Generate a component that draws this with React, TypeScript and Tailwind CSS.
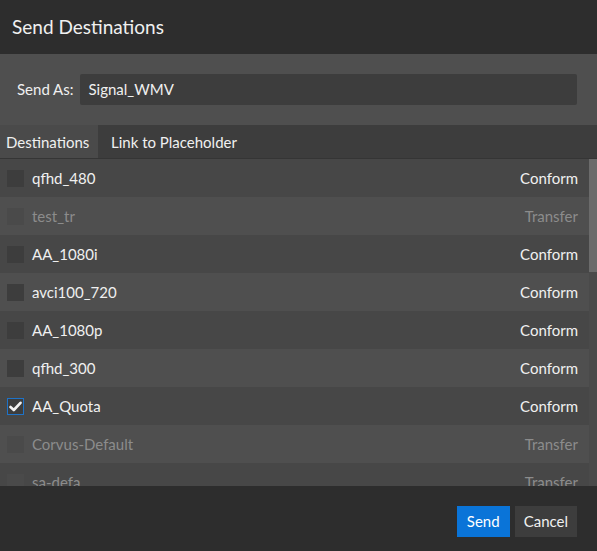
import React from 'react';

type Dest = { name: string; mode: string; enabled: boolean; checked?: boolean };

const destinations: Dest[] = [
  { name: 'qfhd_480', mode: 'Conform', enabled: true },
  { name: 'test_tr', mode: 'Transfer', enabled: false },
  { name: 'AA_1080i', mode: 'Conform', enabled: true },
  { name: 'avci100_720', mode: 'Conform', enabled: true },
  { name: 'AA_1080p', mode: 'Conform', enabled: true },
  { name: 'qfhd_300', mode: 'Conform', enabled: true },
  { name: 'AA_Quota', mode: 'Conform', enabled: true, checked: true },
  { name: 'Corvus-Default', mode: 'Transfer', enabled: false },
  { name: 'sa-defa', mode: 'Transfer', enabled: false },
];

const Checkbox = ({ checked, enabled }: { checked?: boolean; enabled: boolean }) => (
  <div
    className={`w-[17px] h-[17px] flex items-center justify-center shrink-0 ${
      checked ? 'border border-[#1e73c8] bg-[#3d3d3d]' : enabled ? 'bg-[#3d3d3d]' : 'bg-[#4a4a4a]'
    }`}
  >
    {checked && (
      <svg width="13" height="11" viewBox="0 0 13 11">
        <path d="M1.5 6 L4.8 9 L11.5 1.8" fill="none" stroke="#f2f2f2" strokeWidth="2.6" strokeLinecap="round" strokeLinejoin="round" />
      </svg>
    )}
  </div>
);

export default function App() {
  return (
    <div className="w-[597px] h-[551px] flex flex-col bg-[#2d2d2d] overflow-hidden font-['Lato',sans-serif] text-[#f0f0f0]">
      <div className="h-[54px] flex items-center px-3 pb-[2px] shrink-0">
        <h1 className="text-[19px] leading-none">Send Destinations</h1>
      </div>

      <div className="h-[71px] bg-[#4f4f4f] flex items-center pl-[17px] pr-5 gap-[6px] shrink-0">
        <span className="text-[15px]">Send As:</span>
        <div className="flex-1 h-[31px] bg-[#3d3d3d] rounded-[2px] flex items-center px-[9px] text-[15px]">
          Signal_WMV
        </div>
      </div>

      <div className="h-[34px] bg-[#3d3d3d] flex items-stretch border-b border-[#353535] shrink-0 text-[15px]">
        <div className="w-[98px] bg-[#4a4a4a] flex items-center pl-[6px] pt-[1px]">Destinations</div>
        <div className="flex items-center pl-[13px] pt-[1px]">Link to Placeholder</div>
      </div>

      <div className="flex-1 flex min-h-0 bg-[#4a4a4a]">
        <div className="flex-1 flex flex-col overflow-hidden">
          {destinations.map((d, i) => (
            <div
              key={d.name}
              className={`h-[38px] shrink-0 flex items-center pl-[7px] pr-[11px] text-[15px] ${
                i % 2 === 0 ? 'bg-[#474747]' : 'bg-[#4f4f4f]'
              }`}
            >
              <Checkbox checked={d.checked} enabled={d.enabled} />
              <span className={`ml-[8px] flex-1 ${d.enabled ? 'text-[#f0f0f0]' : 'text-[#8c8c8c]'}`}>{d.name}</span>
              <span className={d.enabled ? 'text-[#f0f0f0]' : 'text-[#8c8c8c]'}>{d.mode}</span>
            </div>
          ))}
        </div>
        <div className="w-[8px] shrink-0">
          <div className="h-[113px] bg-[#6b6b6b]" />
        </div>
      </div>

      <div className="h-[65px] shrink-0 flex items-start justify-end pr-5 pt-[20px] gap-[5px]">
        <button className="h-[31px] px-[10px] bg-[#0a74d8] text-[15px] text-white">Send</button>
        <button className="h-[31px] px-[9px] bg-[#3d3d3d] text-[15px] text-[#f0f0f0]">Cancel</button>
      </div>
    </div>
  );
}
